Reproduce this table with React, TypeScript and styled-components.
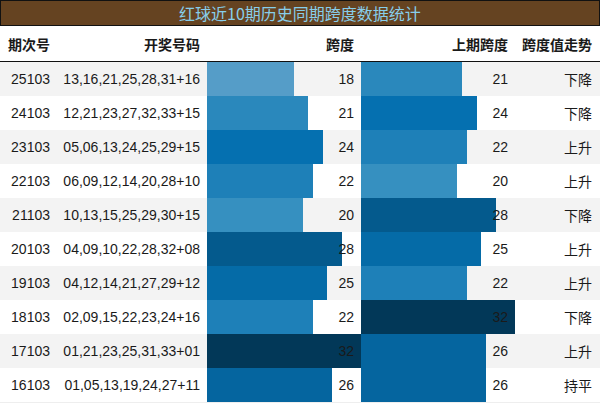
import React from "react";
import styled, { createGlobalStyle } from "styled-components";

const GlobalStyle = createGlobalStyle`
  html, body {
    margin: 0;
    padding: 0;
    background: #ffffff;
  }
  body {
    font-family: "Liberation Sans", "Noto Sans CJK SC", sans-serif;
    color: #1a1a1a;
  }
`;

const Page = styled.div`
  width: 600px;
  display: flex;
  flex-direction: column;
`;

const TitleBar = styled.div`
  height: 24px;
  border: 1px solid #111;
  background: #654321;
  color: #87ceeb;
  font-family: "Noto Sans CJK SC", sans-serif;
  font-size: 16px;
  display: flex;
  align-items: center;
  justify-content: center;
  line-height: 1;
`;

const cols = "57px 150px 154px 154px 85px";

const HeaderRow = styled.div`
  display: grid;
  grid-template-columns: ${cols};
  height: 35px;
  border-bottom: 1px solid #111;
  align-items: center;
`;

const HeadCell = styled.div<{ $pad?: number }>`
  font-family: "Noto Sans CJK SC", sans-serif;
  font-weight: 700;
  font-size: 14px;
  text-align: right;
  padding-right: ${(p) => p.$pad ?? 7}px;
  line-height: 1;
`;

const Row = styled.div<{ $alt: boolean }>`
  display: grid;
  grid-template-columns: ${cols};
  height: 34px;
  align-items: stretch;
  background: ${(p) => (p.$alt ? "#f3f3f3" : "#ffffff")};
`;

const Cell = styled.div<{ $pad?: number; $cjk?: boolean }>`
  display: flex;
  align-items: center;
  justify-content: flex-end;
  padding-right: ${(p) => p.$pad ?? 7}px;
  font-size: 14px;
  font-family: ${(p) =>
    p.$cjk
      ? `"Noto Sans CJK SC", sans-serif`
      : `"Liberation Sans", "Noto Sans CJK SC", sans-serif`};
  color: #1a1a1a;
`;

const BarCell = styled.div`
  display: grid;
  grid-template-columns: 100%;
  grid-template-rows: 100%;
`;

const Bar = styled.div`
  grid-area: 1 / 1;
  justify-self: start;
  height: 100%;
`;

const BarValue = styled.div`
  grid-area: 1 / 1;
  justify-self: end;
  align-self: center;
  padding-right: 7px;
  font-size: 14px;
  color: #1a1a1a;
`;

const Footer = styled.div`
  height: 1px;
  background: #eeeeee;
`;

const PUBU = [
  [255, 247, 251],
  [236, 231, 242],
  [208, 209, 230],
  [166, 189, 219],
  [116, 169, 207],
  [54, 144, 192],
  [5, 112, 176],
  [4, 90, 141],
  [2, 56, 88],
];

function pubu(t: number): string {
  const x = Math.max(0, Math.min(1, t)) * (PUBU.length - 1);
  const i = Math.min(PUBU.length - 2, Math.floor(x));
  const f = x - i;
  const a = PUBU[i];
  const b = PUBU[i + 1];
  const c = a.map((v, k) => Math.round(v + (b[k] - v) * f));
  return `rgb(${c[0]},${c[1]},${c[2]})`;
}

const MAX = 32;

type Draw = {
  issue: string;
  nums: string;
  span: number;
  prev: number;
  trend: string;
};

const data: Draw[] = [
  { issue: "25103", nums: "13,16,21,25,28,31+16", span: 18, prev: 21, trend: "下降" },
  { issue: "24103", nums: "12,21,23,27,32,33+15", span: 21, prev: 24, trend: "下降" },
  { issue: "23103", nums: "05,06,13,24,25,29+15", span: 24, prev: 22, trend: "上升" },
  { issue: "22103", nums: "06,09,12,14,20,28+10", span: 22, prev: 20, trend: "上升" },
  { issue: "21103", nums: "10,13,15,25,29,30+15", span: 20, prev: 28, trend: "下降" },
  { issue: "20103", nums: "04,09,10,22,28,32+08", span: 28, prev: 25, trend: "上升" },
  { issue: "19103", nums: "04,12,14,21,27,29+12", span: 25, prev: 22, trend: "上升" },
  { issue: "18103", nums: "02,09,15,22,23,24+16", span: 22, prev: 32, trend: "下降" },
  { issue: "17103", nums: "01,21,23,25,31,33+01", span: 32, prev: 26, trend: "上升" },
  { issue: "16103", nums: "01,05,13,19,24,27+11", span: 26, prev: 26, trend: "持平" },
];

function SpanBar({ value }: { value: number }) {
  return (
    <BarCell>
      <Bar style={{ width: `${(value / MAX) * 100}%`, background: pubu(value / MAX) }} />
      <BarValue>{value}</BarValue>
    </BarCell>
  );
}

export default function App() {
  return (
    <>
      <GlobalStyle />
      <Page>
        <TitleBar>红球近10期历史同期跨度数据统计</TitleBar>
        <HeaderRow>
          <HeadCell>期次号</HeadCell>
          <HeadCell>开奖号码</HeadCell>
          <HeadCell>跨度</HeadCell>
          <HeadCell>上期跨度</HeadCell>
          <HeadCell $pad={8}>跨度值走势</HeadCell>
        </HeaderRow>
        {data.map((d, i) => (
          <Row key={d.issue} $alt={i % 2 === 0}>
            <Cell>{d.issue}</Cell>
            <Cell>{d.nums}</Cell>
            <SpanBar value={d.span} />
            <SpanBar value={d.prev} />
            <Cell $pad={8} $cjk>
              {d.trend}
            </Cell>
          </Row>
        ))}
        <Footer />
      </Page>
    </>
  );
}
